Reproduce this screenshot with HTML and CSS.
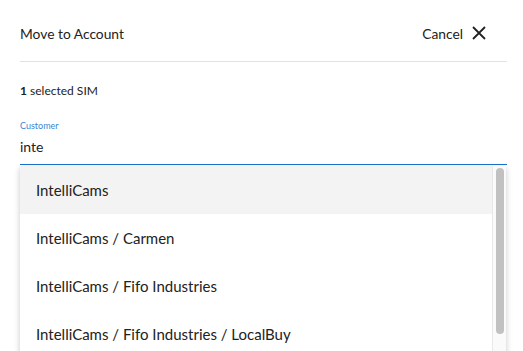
FILE: index.html
```html
<!DOCTYPE html>
<html>
<head>
<meta charset="utf-8">
<link rel="stylesheet" href="styles.css">
</head>
<body>
<div class="dialog">
  <header class="head">
    <div class="title">Move to Account</div>
    <button class="cancel">Cancel
      <svg width="16" height="16" viewBox="0 0 16 16"><path d="M2 2L14 14M14 2L2 14" stroke="#222" stroke-width="1.8" fill="none"/></svg>
    </button>
  </header>
  <div class="count"><b>1</b> selected SIM</div>
  <div class="field">
    <div class="label">Customer</div>
    <div class="input">inte</div>
  </div>
  <div class="menu">
    <ul class="list">
      <li class="item active">IntelliCams</li>
      <li class="item">IntelliCams / Carmen</li>
      <li class="item">IntelliCams / Fifo Industries</li>
      <li class="item">IntelliCams / Fifo Industries / LocalBuy</li>
    </ul>
    <div class="track"><div class="thumb"></div></div>
  </div>
</div>
</body>
</html>
```
FILE: styles.css
```css
html, body { margin: 0; padding: 0; background: #fff; overflow: hidden; }
body { font-family: "Source Sans Pro", "Lato", "Noto Sans", sans-serif; color: #222; }
.dialog { padding: 0 16px 0 20px; height: 351px; overflow: hidden; }
.head { height: 62px; border-bottom: 1px solid #e2e2e2; display: flex; align-items: center; justify-content: space-between; padding-top: 5px; box-sizing: border-box; }
.title { font-size: 13.8px; }
.cancel { border: 0; background: none; font: inherit; font-size: 13.8px; color: #222; display: flex; align-items: center; gap: 8px; padding: 0 20px 0 0; }
.count { font-size: 12px; margin-top: 21px; line-height: 16px; }
.count b { font-weight: 700; }
.field { margin-top: 21px; border-bottom: 1px solid #1a73c8; }
.label { font-size: 9px; color: #3a86d0; line-height: 12px; }
.input { font-size: 14px; line-height: 18px; padding: 6px 0 8px; }
.menu { display: flex; height: 200px; box-shadow: 0 2px 6px rgba(0,0,0,.22); margin-right: 1px; margin-top: 1px; }
.list { list-style: none; margin: 0; padding: 0; flex: 1; }
.item { height: 48px; line-height: 48px; padding-left: 16px; font-size: 15px; color: #222; }
.item.active { background: #f3f3f3; }
.track { border-left: 1px solid #e8e8e8; background: #fafafa; padding: 2px 3px 0; box-sizing: border-box; width: 14px; }
.thumb { width: 8px; height: 166px; background: #c1c1c1; border-radius: 4px; }
```
